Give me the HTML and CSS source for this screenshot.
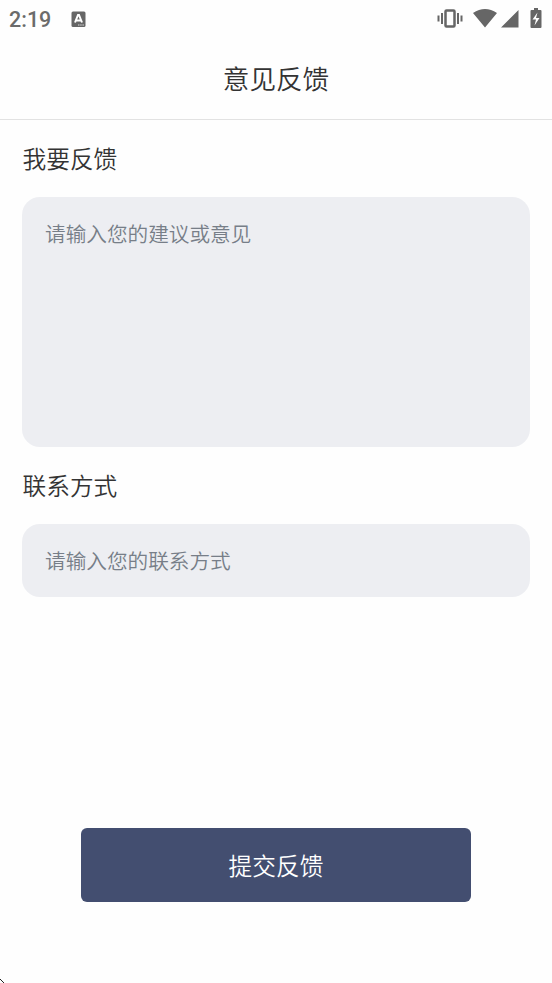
FILE: index.html
```html
<!DOCTYPE html>
<html lang="zh-CN">
<head>
<meta charset="utf-8">
<title>意见反馈</title>
<link rel="stylesheet" href="styles.css">
</head>
<body>
<div class="status">
  <span class="time">2:19</span>
  <svg class="app" width="15" height="17" viewBox="0 0 15 17"><rect x=".5" y=".5" width="14" height="15.500" rx="1.500" fill="#666"/><path d="M4 11.500L7 4h1l3 7.500M5.500 9.500h4" fill="none" stroke="#fff" stroke-width="2"/><path d="M7 14h6" stroke="#ddd" stroke-dasharray="1.500 .7"/></svg>
  <svg class="icons" width="106" height="22" viewBox="437 8 106 22" fill="#666"><path d="M437.500 15.500h2v6h-2zM441 13h2v11h-2zM457 13h2v11h-2zM460.500 15.500h2v6h-2z"/><rect x="445.500" y="10.500" width="9" height="16" rx="1" fill="none" stroke="#666" stroke-width="2.500"/><path d="M473 13Q485 5 497 13L485 27.500zM518.500 10v17.500h-17.500z"/><path d="M533 10h1V8h4v2h2.500q1 0 1 1v16q0 1-1 1h-9q-1 0-1-1V11q0-1 1-1z"/><path d="M537.500 12.500l-5 7h3.500l-1.500 6 5-7.500h-3.500z" fill="#fff"/></svg>
</div>
<header class="header"><h1>意见反馈</h1></header>
<main class="form">
  <label class="label" for="msg">我要反馈</label>
  <textarea class="field message" id="msg" placeholder="请输入您的建议或意见"></textarea>
  <label class="label" for="contact">联系方式</label>
  <input class="field contact" id="contact" placeholder="请输入您的联系方式">
  <button class="submit">提交反馈</button>
</main>
<svg class="corner" width="4" height="4" viewBox="0 0 4 4" fill="#222"><path d="M0 0h1v1H0zM1 1h1v1H1zM2 2h1v1H2zM3 3h1v1H3z"/></svg>
</body>
</html>
```
FILE: styles.css
```css
* { box-sizing: border-box; }
body { margin: 0; height: 983px; position: relative; overflow: hidden; background: #fefefe; color: #333; font-family: Roboto, "Noto Sans CJK SC", sans-serif; font-weight: 350; }
.status { height: 38px; display: flex; align-items: center; padding: 0 9px; }
.time { width: 62px; font-size: 21.500px; font-weight: 500; color: #6b6b6b; padding-top: 1px; }
.icons { margin-left: auto; }
.header { height: 82px; border-bottom: 1px solid #e2e2e2; text-align: center; }
h1 { margin: 0; font-size: 26.600px; font-weight: 350; line-height: 83px; }
.form { display: flex; flex-direction: column; padding: 0 22px; }
.label { height: 77px; line-height: 80px; font-size: 23.700px; padding-left: .5px; }
.field { width: 100%; margin: 0; border: 0; border-radius: 18px; background: #edeef2; padding: 0 23px; font: 350 20.650px Roboto, "Noto Sans CJK SC", sans-serif; resize: none; outline: none; }
.field::placeholder { color: #777e88; opacity: 1; }
.message { height: 250px; padding-top: 21px; }
.contact { height: 73px; padding-top: 2px; }
.submit { width: 390px; height: 74px; margin: 231px auto 0; padding: 0; border: 0; border-radius: 6px; background: #434e70; color: #fff; font: 350 23.700px Roboto, "Noto Sans CJK SC", sans-serif; }
.corner { position: absolute; left: 0; bottom: 0; }
```
